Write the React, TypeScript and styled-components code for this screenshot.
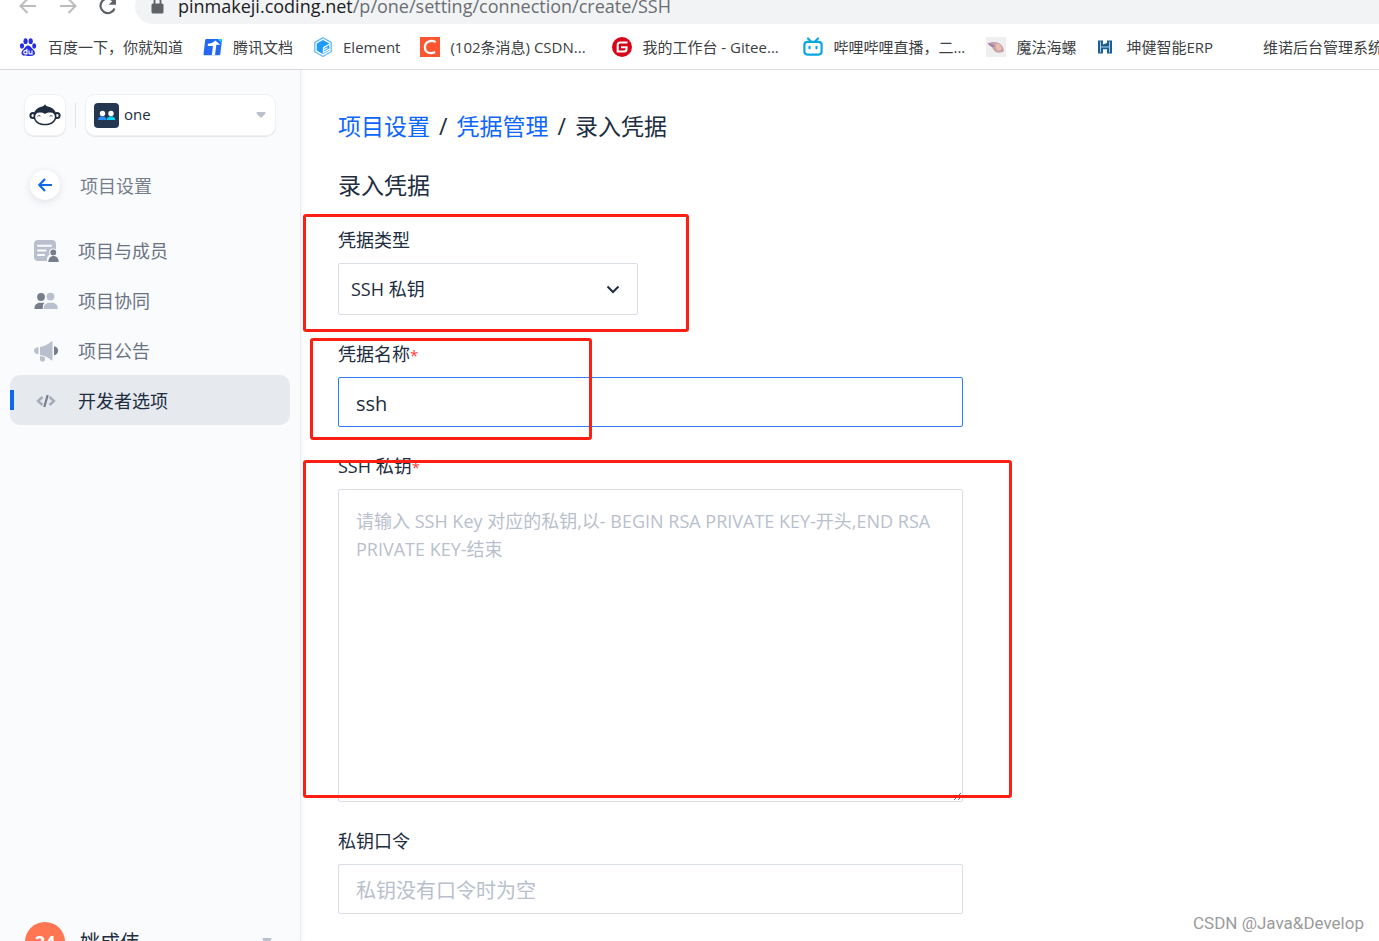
import React from "react";
import styled, { createGlobalStyle } from "styled-components";

const sans = `"Open Sans", "Noto Sans CJK SC", sans-serif`;

const GlobalStyle = createGlobalStyle`
  *, *::before, *::after { box-sizing: border-box; }
  body { margin: 0; background: #fff; color: #202d40; font-family: ${sans}; }
  a { color: inherit; text-decoration: none; }
  button, input, select, textarea { font-family: inherit; color: inherit; }
  svg { display: block; flex: none; }
`;

const Window = styled.div`
  display: flex;
  flex-direction: column;
  height: 100vh;
  overflow: hidden;
  position: relative;
`;

/* ---------- browser chrome ---------- */

const Toolbar = styled.header`
  display: flex;
  align-items: flex-end;
  flex: none;
  gap: 20px;
  height: 24px;
  padding-left: 18px;
  overflow: hidden;
`;

const ToolButton = styled.button<{ $dim?: boolean }>`
  display: flex;
  align-items: center;
  justify-content: center;
  flex: none;
  width: 20px;
  height: 36px;
  padding: 0;
  border: 0;
  background: none;
  color: ${(p) => (p.$dim ? "#babcbe" : "#5f6368")};
`;

const AddressBar = styled.div`
  display: flex;
  align-items: center;
  flex: 1;
  height: 36px;
  margin: 0 -20px 0 -3px;
  padding-left: 16px;
  gap: 14px;
  border-radius: 18px;
  background: #f1f3f4;
  color: #5f6368;
`;

const Url = styled.span`
  font-size: 18px;
  line-height: 28px;
  white-space: nowrap;
  color: #6a6e73;
  b { font-weight: 400; color: #202124; }
`;

const Bookmarks = styled.nav`
  display: flex;
  align-items: center;
  flex: none;
  gap: 20px;
  height: 46px;
  padding-left: 18px;
  border-bottom: 1px solid #d9dbdd;
  overflow: hidden;
`;

const Bookmark = styled.a<{ $width?: number }>`
  display: flex;
  align-items: center;
  flex: none;
  gap: 10px;
  min-width: ${(p) => (p.$width ? `${p.$width}px` : "auto")};
  font-size: 15px;
  line-height: 20px;
  white-space: nowrap;
  color: #3c4043;
`;

/* ---------- sidebar ---------- */

const Body = styled.div`
  display: flex;
  flex: 1;
  min-height: 0;
`;

const Sidebar = styled.aside`
  display: flex;
  flex-direction: column;
  flex: none;
  width: 301px;
  padding-top: 24px;
  background: #fafbfd;
  border-right: 1px solid #e9ebef;
  box-shadow: 2px 0 4px rgba(32, 45, 64, 0.04);
`;

const SideHead = styled.div`
  display: flex;
  align-items: center;
  gap: 9px;
  padding: 0 24px;
`;

const Logo = styled.a`
  display: flex;
  align-items: center;
  justify-content: center;
  width: 42px;
  height: 42px;
  border: 1px solid #eff1f4;
  border-radius: 10px;
  background: #fff;
  box-shadow: 0 1px 1px rgba(32, 45, 64, 0.1);
`;

const Divider = styled.span`
  width: 1px;
  height: 25px;
  background: #dfe2e7;
`;

const ProjectPicker = styled.button`
  display: flex;
  align-items: center;
  flex: 1;
  gap: 5px;
  height: 42px;
  padding: 0 9px 0 8px;
  border: 1px solid #eff1f4;
  border-radius: 10px;
  background: #fff;
  box-shadow: 0 1px 1px rgba(32, 45, 64, 0.1);
  font-size: 15px;
  line-height: 20px;
  text-align: left;
  span { flex: 1; padding-bottom: 2px; }
`;

const Back = styled.a`
  display: flex;
  align-items: center;
  gap: 20px;
  margin: 34px 0 25px 30px;
  font-size: 18px;
  line-height: 28px;
  color: #767e8c;
  > span:last-child { padding-top: 2px; }
`;

const BackCircle = styled.span`
  display: flex;
  align-items: center;
  justify-content: center;
  width: 30px;
  height: 30px;
  border-radius: 50%;
  background: #fff;
  box-shadow: 0 2px 8px rgba(32, 45, 64, 0.12);
`;

const Menu = styled.nav`
  display: flex;
  flex-direction: column;
  padding: 0 10px;
`;

const MenuItem = styled.a<{ $active?: boolean }>`
  display: flex;
  align-items: center;
  height: 50px;
  border-radius: 10px;
  font-size: 18px;
  color: ${(p) => (p.$active ? "#202d40" : "#6a7383")};
  background: ${(p) => (p.$active ? "#e6e9ee" : "transparent")};
  &::before {
    content: "";
    width: 4px;
    height: 20px;
    background: ${(p) => (p.$active ? "#0f6aeb" : "transparent")};
  }
`;

const MenuIcon = styled.span`
  display: flex;
  justify-content: center;
  width: 26px;
  margin: 0 19px;
  padding-top: 1px;
`;

const UserBar = styled.div`
  display: flex;
  align-items: flex-start;
  gap: 15px;
  height: 19px;
  margin-top: auto;
  padding: 0 28px 0 25px;
  overflow: hidden;
  font-size: 20px;
  line-height: 42px;
  > span { flex: 1; }
  > svg { margin-top: 16px; }
`;

const Avatar = styled.div`
  flex: none;
  width: 40px;
  height: 40px;
  border-radius: 50%;
  background: #ff7752;
  color: #fff;
  font-size: 18px;
  font-weight: 700;
  line-height: 40px;
  text-align: center;
`;

/* ---------- content ---------- */

const Content = styled.main`
  flex: 1;
  min-width: 0;
  padding: 39px 37px 0;
  overflow: hidden;
`;

const Breadcrumb = styled.nav`
  display: flex;
  gap: 9px;
  font-size: 23px;
  line-height: 34px;
  a { color: #0d66ff; }
`;

const Title = styled.h1`
  margin: 25px 0 24px;
  font-size: 23px;
  font-weight: 400;
  line-height: 34px;
`;

const Form = styled.form`
  display: flex;
  flex-direction: column;
  gap: 25px;
  max-width: 625px;
`;

const Field = styled.div`
  display: flex;
  flex-direction: column;
  gap: 8px;
  position: relative;
`;

const Label = styled.label`
  font-size: 18px;
  line-height: 29px;
  i { font-style: normal; font-size: 15px; line-height: 1; color: #ff3b30; }
`;

const SelectWrap = styled.div`
  display: grid;
  align-items: center;
  width: 300px;
  > * { grid-area: 1 / 1; }
  > svg { justify-self: end; margin-right: 18px; pointer-events: none; }
`;

const Select = styled.select`
  appearance: none;
  width: 100%;
  height: 52px;
  padding: 0 12px;
  border: 1px solid #dadfe6;
  border-radius: 2px;
  background: #fff;
  font-size: 18px;
`;

const Input = styled.input<{ $focused?: boolean }>`
  width: 100%;
  height: 50px;
  padding: 2px 17px 0;
  border: 1px solid ${(p) => (p.$focused ? "#2d7df6" : "#dadfe6")};
  border-radius: 2px;
  outline: 0;
  background: #fff;
  font-size: 20px;
  &::placeholder { color: #b9c0cd; }
`;

const TextArea = styled.textarea`
  width: 100%;
  height: 313px;
  padding: 17px;
  border: 1px solid #dadfe6;
  border-radius: 2px;
  outline: 0;
  background: #fff;
  font-size: 18px;
  line-height: 28px;
  resize: vertical;
  &::placeholder { color: #b9c0cd; }
`;

const Highlight = styled.div<{ $x: number; $y: number; $w: number; $h: number }>`
  position: absolute;
  left: ${(p) => p.$x}px;
  top: ${(p) => p.$y}px;
  width: ${(p) => p.$w}px;
  height: ${(p) => p.$h}px;
  border: 3px solid #ff1f12;
  border-radius: 3px;
  pointer-events: none;
`;

const Watermark = styled.div`
  position: absolute;
  right: 15px;
  bottom: 6px;
  font-family: Roboto, "Liberation Sans", sans-serif;
  font-size: 17px;
  line-height: 24px;
  color: #9b9b9b;
`;

/* ---------- icons ---------- */

const Arrow = ({ flip }: { flip?: boolean }) => (
  <svg width="20" height="20" viewBox="0 0 20 20" fill="none" stroke="currentColor" strokeWidth="2">
    <path d={flip ? "M2 10h15M10.500 3l7 7-7 7" : "M18 10H3M9.500 3l-7 7 7 7"} />
  </svg>
);

const Reload = () => (
  <svg width="20" height="20" viewBox="0 0 20 20" fill="none" stroke="currentColor" strokeWidth="2.200">
    <path d="M16.600 12.500A7.300 7.300 0 1 1 15.500 5.200L17 7" />
    <path d="M18 1.500v7.300h-7.300z" fill="currentColor" stroke="none" />
  </svg>
);

const Lock = () => (
  <svg width="13" height="18" viewBox="0 0 13 18">
    <rect x="0.500" y="6.500" width="12" height="10" rx="1.500" fill="currentColor" />
    <path d="M3.500 7V4a3 3 0 0 1 6 0v3" fill="none" stroke="currentColor" strokeWidth="1.800" />
  </svg>
);

const BaiduIcon = () => (
  <svg width="20" height="20" viewBox="0 0 20 20" fill="#2930e0">
    <ellipse cx="4" cy="9" rx="2.100" ry="2.700" />
    <ellipse cx="7.600" cy="4.200" rx="2.100" ry="2.900" />
    <ellipse cx="12.700" cy="4.200" rx="2.100" ry="2.900" />
    <ellipse cx="16.200" cy="9" rx="2" ry="2.700" />
    <path d="M10 8.500c2.200 0 3 2 4.600 3.600 1.500 1.500 2.600 2.500 2.300 4.300-.4 2.300-2.300 2.500-6.900 2.500s-6.200-.3-6.500-2.600c-.2-1.700.9-2.700 2.300-4.200C7.300 10.500 7.900 8.500 10 8.500z" />
    <path d="M8.900 11.700v5.200H7.400c-2.200 0-2.200-3.300 0-3.300h1.500M11 13.500v2.400c0 .7.300 1 1 1h2v-3.400" fill="none" stroke="#fff" strokeWidth="1.200" />
  </svg>
);

const TencentDocIcon = () => (
  <svg width="20" height="20" viewBox="0 0 20 20">
    <path d="M3.500 2H18c.8 0 1.100.4 1 1.200L17.300 17c-.1.900-.6 1.300-1.400 1.300H1.500c-.8 0-1.100-.5-1-1.300L2.200 3.200C2.300 2.400 2.800 2 3.500 2z" fill="#2468f2" />
    <path d="M14.500 2H18c.8 0 1.100.4 1 1.200l-.4 3z" fill="#24c8ff" />
    <path d="M5 6.800c2.500-.2 5-1 7.300-3.300l5 4.300h-4l-1.300 10.500H8.800L10 9H4.700z" fill="#fff" />
  </svg>
);

const ElementIcon = () => (
  <svg width="20" height="20" viewBox="0 0 20 20">
    <path d="M10 .7l8.200 4.700v9.300L10 19.400l-8.200-4.700V5.400z" fill="#fff" stroke="#53b6ff" strokeWidth="1.200" />
    <path d="M10 3l6.300 3.500v7L10 17l-6.300-3.500v-7z" fill="#1d9bff" />
    <path d="M16.500 7.300L10.500 10.700v4.600l6-3.300M10.500 13l4-2.200" fill="none" stroke="#fff" strokeWidth="1.300" />
  </svg>
);

const CsdnIcon = () => (
  <svg width="20" height="20" viewBox="0 0 20 20">
    <path d="M0 0h20v20H0z" fill="#fc5531" />
    <path d="M15.700 5.200C12.400 3 5 3.400 4.900 10.300 4.900 16.500 11 17 15.100 15" fill="none" stroke="#fff" strokeWidth="2.200" />
  </svg>
);

const GiteeIcon = () => (
  <svg width="20" height="20" viewBox="0 0 20 20">
    <circle cx="10" cy="10" r="10" fill="#d8041a" />
    <path d="M15.500 5.500H8.200c-1.700 0-2.500 1-2.500 2.500v6.500h6.500c1.600 0 2.300-.9 2.300-2.500v-1.700H9" fill="none" stroke="#fff" strokeWidth="2.100" />
  </svg>
);

const BilibiliIcon = () => (
  <svg width="20" height="20" viewBox="0 0 20 20" fill="none" stroke="#0aa7de" strokeWidth="2.200" strokeLinecap="round">
    <rect x="1.400" y="4.800" width="17.200" height="12.800" rx="3" />
    <path d="M5 1.500l2.700 2.700M15 1.500l-2.700 2.700M6.500 9.800v1.500M13.500 9.800v1.500" />
  </svg>
);

const ShellIcon = () => (
  <svg width="20" height="20" viewBox="0 0 20 20">
    <path d="M0 0h20v20H0z" fill="#efefef" />
    <path d="M1.500 6.500c3-1.500 7.500-2 11-.5 3.200 1.400 5 4 5.500 8-2.500 2-6 2.300-8.500.7-2-1.300-2.500-3-3.600-4.500z" fill="#c9a0ac" />
    <path d="M1.500 6.500c3 0 5.500.5 7.500 3-2 .8-4 .3-5-.8z" fill="#9c86ad" />
    <path d="M10 7c3-.5 5.500 1.500 5.500 4s-3 3.500-4.500 2-1.500-4-1-6z" fill="#e9c2ae" />
  </svg>
);

const HIcon = () => (
  <svg width="20" height="20" viewBox="0 0 20 20">
    <path d="M2 3.500h5v4l4-1.500V3.500h5v13h-5v-4.300H7v4.300H2z" fill="#1b5f93" />
    <path d="M4.500 4.500v11M13.500 4.500v11M4.500 10h9" stroke="#d8e8f4" strokeWidth="0.800" />
  </svg>
);

const Monkey = () => (
  <svg width="32" height="24" viewBox="0 0 32 24">
    <circle cx="4" cy="12.500" r="2.600" fill="#fff" stroke="#202d40" strokeWidth="2" />
    <circle cx="28" cy="12.500" r="2.600" fill="#fff" stroke="#202d40" strokeWidth="2" />
    <path d="M16 1c.5 1.700 1.500 2.200 3.500 2.700C24.500 5 27.500 8.500 27.500 13c0 6-5 9.300-11.500 9.300S4.500 19 4.500 13c0-4.500 3-8 8-9.300C14.500 3.200 15.500 2.700 16 1z" fill="#202d40" />
    <path d="M10.500 9.500c2.300 0 4 .4 5.500 1.400 1.500-1 3.200-1.400 5.500-1.400 2.800 0 4.300 1.800 4.300 4.200 0 4.300-4 7-9.800 7s-9.800-2.700-9.800-7c0-2.400 1.500-4.200 4.300-4.200z" fill="#fff" />
    <path d="M8.500 13.200q1.500-1.200 3 0M20.500 13.200q1.500-1.200 3 0" fill="none" stroke="#202d40" strokeWidth="0.800" />
  </svg>
);

const ProjectIcon = () => (
  <svg width="25" height="25" viewBox="0 0 25 25">
    <rect width="25" height="25" rx="4" fill="#253750" />
    <circle cx="8.500" cy="10.500" r="2.700" fill="#fff" />
    <circle cx="17" cy="10.500" r="2.700" fill="#fff" />
    <path d="M4 17c0-5 8.500-5 8.500 0z" fill="#2d8cff" />
    <path d="M12.800 17c0-5 8.500-5 8.500 0z" fill="#00d4f0" />
  </svg>
);

const Caret = () => (
  <svg width="10" height="6" viewBox="0 0 10 6" fill="#b9c0cd">
    <path d="M.7 0h8.600v1.800L5.800 5.200q-.8.700-1.600 0L.7 1.800z" />
  </svg>
);

const BackArrow = () => (
  <svg width="16" height="14" viewBox="0 0 16 14" fill="none" stroke="#0f6aeb" strokeWidth="2.200">
    <path d="M15 7H2.500M8 1L2.300 7 8 13" />
  </svg>
);

const MembersIcon = () => (
  <svg width="26" height="24" viewBox="0 0 26 24">
    <path d="M5 1h14c2.500 0 4 1.500 4 4v5.500c-4-2.800-8.500 1-6.300 5-1.500.9-2.700 2.500-2.700 4.500V22H5c-2.500 0-4-1.500-4-4V5c0-2.500 1.500-4 4-4z" fill="#b9c0cd" />
    <path d="M5 6.800h13M5 11.500h7.500M5 16h6" stroke="#fafbfd" strokeWidth="2" strokeLinecap="round" />
    <circle cx="20.300" cy="13.500" r="2.900" fill="#767e8c" />
    <path d="M15.300 23c0-8 10.400-8 10.400 0z" fill="#767e8c" />
  </svg>
);

const TeamIcon = () => (
  <svg width="24" height="18" viewBox="0 0 24 18">
    <circle cx="7" cy="5" r="3.900" fill="#767e8c" />
    <circle cx="16.500" cy="4.600" r="3.900" fill="#b9c0cd" />
    <path d="M.5 17v-1c0-3 2.500-5.300 5.500-5.300h4.500C8.800 12.300 9 14 8.700 17z" fill="#767e8c" />
    <path d="M9.700 17v-1c0-3 2.500-5.300 5.500-5.300h3c3 0 5.500 2.300 5.500 5.300v1z" fill="#b9c0cd" />
  </svg>
);

const HornIcon = () => (
  <svg width="26" height="22" viewBox="0 0 26 22">
    <path d="M19.500 1.200v18.300c0 1-.8 1.200-1.500.6-2.800-2.400-6.500-4.600-11-5.100V7c4.500-.5 8.200-2.700 11-5.200.7-.7 1.500-.6 1.500-.6z" fill="#b9c0cd" />
    <path d="M5.500 7.200v7C2.800 14 1 12.700 1 10.700s1.800-3.400 4.500-3.500z" fill="#b9c0cd" />
    <path d="M7 16c2 .1 3.400.5 5 1.500v2c0 1.300-1 2.200-2.400 2.200S7 20.800 7 19.500z" fill="#b9c0cd" />
    <path d="M21 6.200c5.500.500 5.500 8.500 0 9z" fill="#767e8c" />
  </svg>
);

const CodeIcon = () => (
  <svg width="20" height="14" viewBox="0 0 20 14" fill="none" strokeWidth="2.400">
    <path d="M6.500 3L2 7l4.500 4M13.500 3L18 7l-4.500 4" stroke="#a5acb9" />
    <path d="M11.700 1l-3.400 12" stroke="#767e8c" strokeWidth="2.200" />
  </svg>
);

const Chevron = () => (
  <svg width="14" height="9" viewBox="0 0 14 9" fill="none" stroke="#202d40" strokeWidth="2">
    <path d="M1.500 1.500L7 7l5.500-5.500" />
  </svg>
);

const BlankIcon = () => <svg width="20" height="20" viewBox="0 0 20 20" />;

/* ---------- data ---------- */

/* Shortened titles keep the width of their bookmark slot. */
const bookmarks = [
  { Icon: BaiduIcon, text: "百度一下，你就知道" },
  { Icon: TencentDocIcon, text: "腾讯文档" },
  { Icon: ElementIcon, text: "Element" },
  { Icon: CsdnIcon, text: "(102条消息) CSDN...", width: 172 },
  { Icon: GiteeIcon, text: "我的工作台 - Gitee...", width: 171 },
  { Icon: BilibiliIcon, text: "哔哩哔哩直播，二...", width: 163 },
  { Icon: ShellIcon, text: "魔法海螺" },
  { Icon: HIcon, text: "坤健智能ERP" },
  { Icon: BlankIcon, text: "维诺后台管理系统" },
];

const menu = [
  { Icon: MembersIcon, text: "项目与成员" },
  { Icon: TeamIcon, text: "项目协同" },
  { Icon: HornIcon, text: "项目公告" },
  { Icon: CodeIcon, text: "开发者选项", active: true },
];

export default function App() {
  return (
    <Window>
      <GlobalStyle />
      <Toolbar>
        <ToolButton $dim aria-label="后退"><Arrow /></ToolButton>
        <ToolButton $dim aria-label="前进"><Arrow flip /></ToolButton>
        <ToolButton aria-label="重新加载"><Reload /></ToolButton>
        <AddressBar>
          <Lock />
          <Url><b>pinmakeji.coding.net</b>/p/one/setting/connection/create/SSH</Url>
        </AddressBar>
      </Toolbar>
      <Bookmarks>
        {bookmarks.map(({ Icon, text, width }) => (
          <Bookmark href="#" key={text} $width={width}><Icon />{text}</Bookmark>
        ))}
      </Bookmarks>
      <Body>
        <Sidebar>
          <SideHead>
            <Logo href="#" aria-label="CODING"><Monkey /></Logo>
            <Divider />
            <ProjectPicker><ProjectIcon /><span>one</span><Caret /></ProjectPicker>
          </SideHead>
          <Back href="#"><BackCircle><BackArrow /></BackCircle><span>项目设置</span></Back>
          <Menu>
            {menu.map(({ Icon, text, active }) => (
              <MenuItem href="#" key={text} $active={active}>
                <MenuIcon><Icon /></MenuIcon>{text}
              </MenuItem>
            ))}
          </Menu>
          <UserBar><Avatar>24</Avatar><span>姚成伟</span><Caret /></UserBar>
        </Sidebar>
        <Content>
          <Breadcrumb>
            <a href="#">项目设置</a>/<a href="#">凭据管理</a>/<span>录入凭据</span>
          </Breadcrumb>
          <Title>录入凭据</Title>
          <Form>
            <Field>
              <Label htmlFor="type">凭据类型</Label>
              <SelectWrap>
                <Select id="type"><option>SSH 私钥</option></Select>
                <Chevron />
              </SelectWrap>
              <Highlight $x={-35} $y={-12} $w={386} $h={118} />
            </Field>
            <Field>
              <Label htmlFor="name">凭据名称<i>*</i></Label>
              <Input id="name" $focused defaultValue="ssh" />
              <Highlight $x={-28} $y={-2} $w={282} $h={102} />
            </Field>
            <Field>
              <Label htmlFor="key">SSH 私钥<i>*</i></Label>
              <TextArea
                id="key"
                placeholder="请输入 SSH Key 对应的私钥,以- BEGIN RSA PRIVATE KEY-开头,END RSA PRIVATE KEY-结束"
              />
              <Highlight $x={-35} $y={8} $w={709} $h={338} />
            </Field>
            <Field>
              <Label htmlFor="pass">私钥口令</Label>
              <Input id="pass" placeholder="私钥没有口令时为空" />
            </Field>
          </Form>
        </Content>
      </Body>
      <Watermark>CSDN @Java&amp;Develop</Watermark>
    </Window>
  );
}
